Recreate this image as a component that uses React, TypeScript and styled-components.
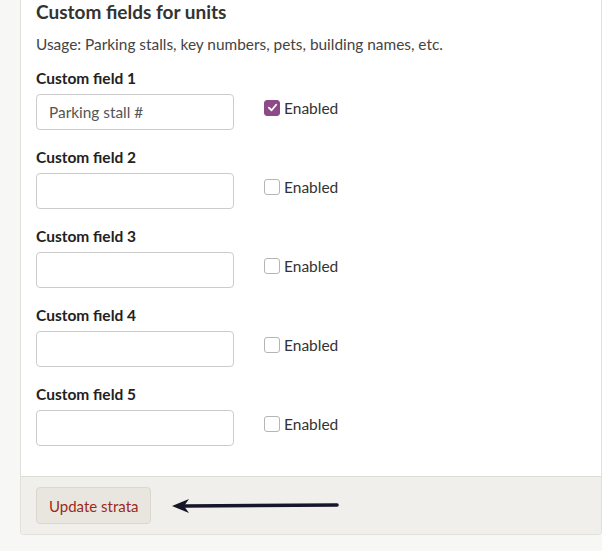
import React from "react";
import styled, { createGlobalStyle } from "styled-components";

const Global = createGlobalStyle`
  html, body { margin: 0; padding: 0; background: #f7f7f5; }
  body { font-family: "Lato", "Open Sans", sans-serif; color: #333; }
  * { box-sizing: border-box; }
`;

const Page = styled.div`
  width: 602px;
  height: 551px;
  padding-left: 20px;
  overflow: hidden;
`;

const Card = styled.div`
  background: #fff;
  border: 1px solid #e2e0da;
  border-top: none;
  border-radius: 0 0 4px 4px;
  width: 582px;
  overflow: hidden;
`;

const Body = styled.div`
  padding: 0 15px 30px 15px;
`;

const Title = styled.h3`
  margin: 0;
  font-size: 19px;
  font-weight: 700;
  line-height: 23px;
  color: #333;
`;

const Help = styled.p`
  margin: 11px 0 0;
  font-size: 15.4px;
  line-height: 20px;
  color: #444;
`;

const Group = styled.div`
  margin-top: 15px;
  & + & { margin-top: 18px; }
`;

const Label = styled.div`
  font-size: 15.5px;
  font-weight: 700;
  line-height: 18px;
  color: #222;
`;

const Row = styled.div`
  display: flex;
  align-items: center;
  margin-top: 7px;
  gap: 30px;
`;

const Input = styled.input`
  width: 198px;
  height: 36px;
  border: 1px solid #ccc;
  border-radius: 4px;
  padding: 0 12px;
  font-family: inherit;
  font-size: 15.4px;
  color: #555;
  background: #fff;
  &::placeholder { color: #666; }
`;

const Check = styled.label`
  display: flex;
  align-items: center;
  gap: 4px;
  font-size: 15.5px;
  color: #333;
  margin-top: -9px;
`;

const Box = styled.span<{ $on: boolean }>`
  width: 16px;
  height: 16px;
  border-radius: 3px;
  border: 1px solid ${(p) => (p.$on ? "#8e4a88" : "#b5b5b5")};
  background: ${(p) => (p.$on ? "#8e4a88" : "#fff")};
  display: inline-flex;
  align-items: center;
  justify-content: center;
`;

const Footer = styled.div`
  background: #f0efeb;
  border-top: 1px solid #dedcd6;
  padding: 10px 15px 10px;
  display: flex;
  align-items: center;
  gap: 20px;
`;

const Button = styled.button`
  height: 37px;
  padding: 0 12px;
  border: 1px solid #dcd7cc;
  border-radius: 4px;
  background: #e9e6e0;
  color: #9c2a1a;
  font-family: inherit;
  font-size: 15px;
`;

const fields = [
  { name: "Custom field 1", value: "Parking stall #", on: true },
  { name: "Custom field 2", value: "", on: false },
  { name: "Custom field 3", value: "", on: false },
  { name: "Custom field 4", value: "", on: false },
  { name: "Custom field 5", value: "", on: false },
];

export default function App() {
  return (
    <Page>
      <Global />
      <Card>
        <Body>
          <Title>Custom fields for units</Title>
          <Help>Usage: Parking stalls, key numbers, pets, building names, etc.</Help>
          {fields.map((f) => (
            <Group key={f.name}>
              <Label>{f.name}</Label>
              <Row>
                <Input defaultValue={f.value} />
                <Check>
                  <Box $on={f.on}>
                    {f.on && (
                      <svg width="11" height="11" viewBox="0 0 12 12">
                        <path d="M2 6.2 L5 9 L10 3" fill="none" stroke="#fff" strokeWidth="2" strokeLinecap="round" strokeLinejoin="round" />
                      </svg>
                    )}
                  </Box>
                  Enabled
                </Check>
              </Row>
            </Group>
          ))}
        </Body>
        <Footer>
          <Button>Update strata</Button>
          <svg width="170" height="18" viewBox="0 0 170 18">
            <path d="M14 9 L166 8" stroke="#16162a" strokeWidth="3.6" strokeLinecap="round" />
            <path d="M1 9 L18 2 L13 9 L18 16 Z" fill="#16162a" />
          </svg>
        </Footer>
      </Card>
    </Page>
  );
}
